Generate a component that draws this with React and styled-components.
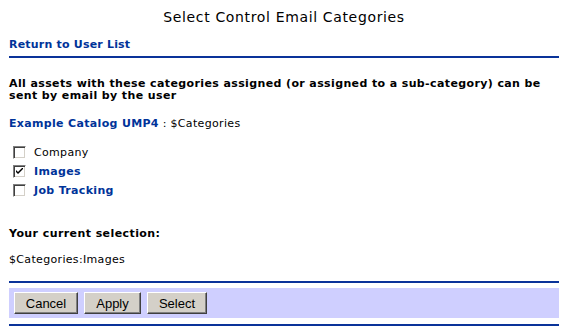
import React, { useState } from "react";
import styled, { createGlobalStyle } from "styled-components";

const Global = createGlobalStyle`
  html, body { margin: 0; padding: 0; background: #fff; }
  body { font-family: Verdana, "DejaVu Sans", sans-serif; color: #000; }
`;

const Page = styled.div`
  padding: 0 9px;
  display: flex;
  flex-direction: column;
`;

const Title = styled.h1`
  margin: 0;
  padding-top: 9px;
  height: 30px;
  box-sizing: border-box;
  text-align: center;
  font-size: 14px;
  letter-spacing: 0.65px;
  font-weight: normal;
  line-height: 16px;
`;

const BackLink = styled.a`
  display: block;
  margin-top: 8px;
  font-size: 11px;
  letter-spacing: 0.2px;
  font-weight: bold;
  color: #003399;
  text-decoration: none;
  line-height: 13px;
`;

const Rule = styled.hr`
  margin: ${(p) => p.$mt || 0}px 0 0 0;
  border: 0;
  height: 2px;
  background: #0a3399;
`;

const Intro = styled.p`
  margin: 20px 0 0 0;
  font-size: 11px;
  letter-spacing: 0.38px;
  font-weight: bold;
  line-height: 12px;
`;

const CatalogLine = styled.div`
  margin-top: 15px;
  font-size: 11px;
  letter-spacing: 0.33px;
  line-height: 13px;
`;

const CatalogName = styled.span`
  color: #003399;
  font-weight: bold;
`;

const List = styled.div`
  margin-top: 16px;
  display: flex;
  flex-direction: column;
  gap: 6px;
`;

const Row = styled.label`
  display: flex;
  align-items: center;
  gap: 8px;
  padding-left: 4px;
  font-size: 11px;
  letter-spacing: 0.33px;
  line-height: 13px;
  color: ${(p) => (p.$link ? "#003399" : "#000")};
  font-weight: ${(p) => (p.$link ? "bold" : "normal")};
`;

const Box = styled.span`
  width: 13px;
  height: 13px;
  box-sizing: border-box;
  border-top: 1px solid #808080;
  border-left: 1px solid #808080;
  border-right: 1px solid #fff;
  border-bottom: 1px solid #fff;
  box-shadow: inset 1px 1px 0 #404040, inset -1px -1px 0 #d4d0c8;
  background: #fff;
  display: flex;
  align-items: center;
  justify-content: center;
  flex: none;
`;

const SectionHead = styled.div`
  margin-top: 31px;
  font-size: 11px;
  letter-spacing: 0.42px;
  font-weight: bold;
  line-height: 12px;
`;

const Selection = styled.div`
  margin-top: 14px;
  font-size: 11px;
  letter-spacing: 0.33px;
  line-height: 12px;
`;

const Bar = styled.div`
  margin-top: 5px;
  background: #cfcfff;
  height: 30px;
  padding: 4px 5px;
  box-sizing: border-box;
  display: flex;
  gap: 6px;
  align-items: flex-start;
`;

const Button = styled.button`
  height: 22px;
  width: ${(p) => p.$w}px;
  padding: 0;
  font-family: "Liberation Sans", Arial, sans-serif;
  font-size: 13px;
  color: #000;
  background: #d4d0c8;
  border-top: 1px solid #fff;
  border-left: 1px solid #fff;
  border-right: 1px solid #404040;
  border-bottom: 1px solid #404040;
  box-shadow: inset -1px -1px 0 #808080;
`;

function Check({ checked }) {
  return (
    <Box>
      {checked && (
        <svg width="7" height="7" viewBox="0 0 7 7">
          <path d="M0 2 L0 4 L2 6 L7 1 L7 -1 L2 4 Z" fill="#000" />
        </svg>
      )}
    </Box>
  );
}

export default function App() {
  const [sel] = useState({ Company: false, Images: true, "Job Tracking": false });
  return (
    <>
      <Global />
      <Page>
        <Title>Select Control Email Categories</Title>
        <BackLink href="#">Return to User List</BackLink>
        <Rule $mt={5} />
        <Intro>
          All assets with these categories assigned (or assigned to a sub-category) can be sent by email by the user
        </Intro>
        <CatalogLine>
          <CatalogName>Example Catalog UMP4</CatalogName> : $Categories
        </CatalogLine>
        <List>
          <Row>
            <Check checked={sel.Company} />
            Company
          </Row>
          <Row $link>
            <Check checked={sel.Images} />
            Images
          </Row>
          <Row $link>
            <Check checked={sel["Job Tracking"]} />
            Job Tracking
          </Row>
        </List>
        <SectionHead>Your current selection:</SectionHead>
        <Selection>$Categories:Images</Selection>
        <Rule $mt={15} />
        <Bar>
          <Button $w={64}>Cancel</Button>
          <Button $w={57}>Apply</Button>
          <Button $w={60}>Select</Button>
        </Bar>
        <Rule $mt={6} />
      </Page>
    </>
  );
}
